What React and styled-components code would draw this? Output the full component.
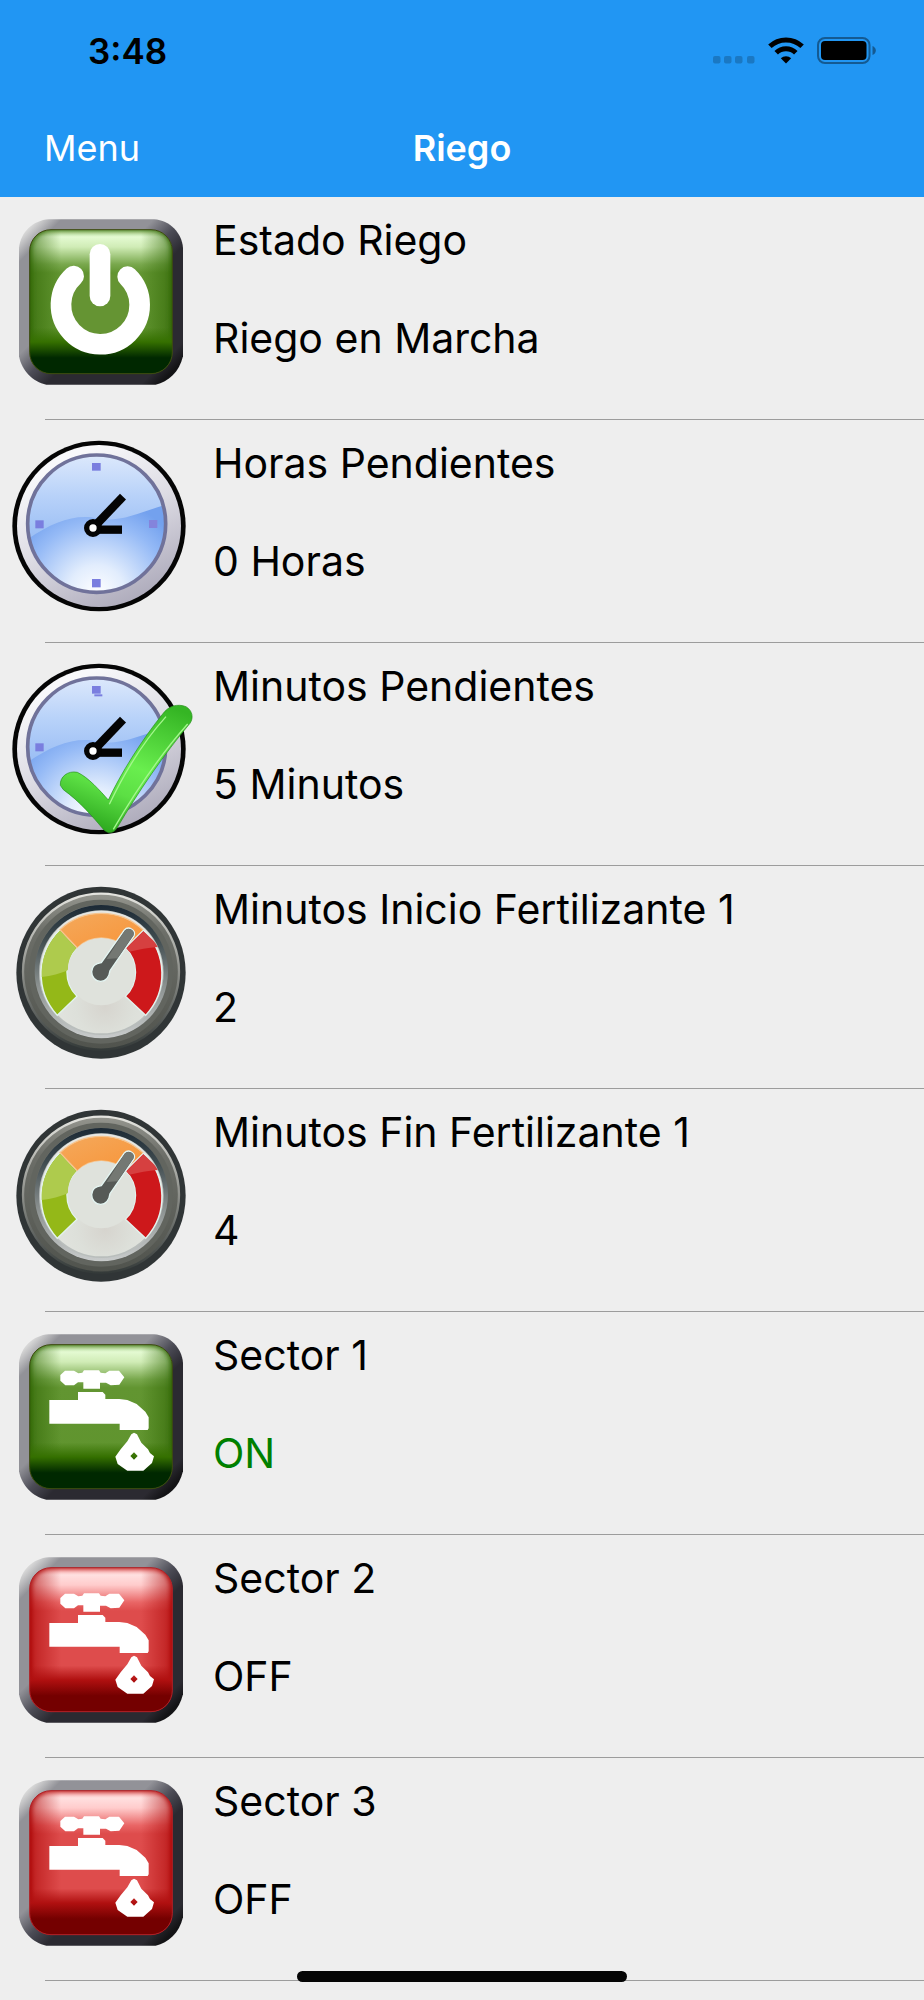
import React, { useId } from "react";
import styled, { createGlobalStyle } from "styled-components";

const GlobalStyle = createGlobalStyle`
  * {
    box-sizing: border-box;
  }

  body {
    margin: 0;
    background: #eeeeee;
    color: #000000;
    font-family: Inter, Roboto, sans-serif;
  }
`;

const Screen = styled.div`
  min-height: 100vh;
  background: #eeeeee;
`;

const Header = styled.header`
  background: #2196f3;
`;

const StatusBar = styled.div`
  display: flex;
  align-items: center;
  justify-content: space-between;
  height: 101px;
  padding: 0 47px 0 88px;
`;

const Time = styled.time`
  font-size: 35px;
  font-weight: 600;
`;

const StatusIcons = styled.div`
  display: flex;
  align-items: center;
  gap: 13px;
`;

const NavBar = styled.nav`
  display: grid;
  grid-template-columns: 1fr auto 1fr;
  align-items: center;
  height: 96px;
  padding: 0 44px 3px;
  color: #ffffff;
`;

const MenuButton = styled.button`
  justify-self: start;
  padding: 0;
  border: 0;
  background: none;
  color: inherit;
  font-family: inherit;
  font-size: 36px;
  cursor: pointer;
`;

const Title = styled.h1`
  margin: 0;
  font-size: 36px;
  font-weight: 600;
`;

const List = styled.ul`
  margin: 0;
  padding: 0;
  list-style: none;
`;

const Row = styled.li`
  display: grid;
  grid-template-columns: 200px 1fr;
  column-gap: 13px;
`;

const Info = styled.div`
  display: flex;
  flex-direction: column;
  gap: 48px;
  padding: 18px 0 56px;
`;

const Label = styled.p`
  margin: 0;
  font-size: 41px;
  line-height: 50px;
  color: ${(props) => props.$color || "#000000"};
`;

const Separator = styled.div`
  grid-column: 1 / -1;
  height: 1px;
  margin-left: 45px;
  background: #9c9c9c;
`;

const Icon = styled.svg`
  display: block;
  width: 200px;
  height: 210px;
`;

const HomeIndicator = styled.div`
  position: fixed;
  bottom: 18px;
  left: 50%;
  width: 330px;
  height: 11px;
  margin-left: -165px;
  border-radius: 6px;
  background: #050505;
`;

const panelColors = {
  green: {
    edge: "#2c6200",
    line: "#3d4a10",
    low: "#357000",
    base: "#002800",
    stops: [
      [0, "#b5d894"],
      [0.05, "#e4fad2"],
      [0.12, "#d0ecb6"],
      [0.24, "#79a84d"],
      [0.3, "#629531"],
      [1, "#5f942d"],
    ],
  },
  red: {
    edge: "#a80000",
    line: "#b02026",
    low: "#b01010",
    base: "#740000",
    stops: [
      [0, "#ffb0b0"],
      [0.05, "#ffe0e0"],
      [0.12, "#ffcccc"],
      [0.24, "#e96666"],
      [0.3, "#de4c4c"],
      [1, "#de4c4c"],
    ],
  },
};

const Panel = ({ color, children }) => {
  const id = useId();
  const { edge, line, low, base, stops } = panelColors[color];
  return (
    <Icon viewBox="0 -10 600 630" aria-hidden="true">
      <defs>
        <linearGradient id={`${id}frame`} x1="0" y1="0" x2="1" y2="1">
          <stop offset="0.06" stopColor="#d6d6d6" />
          <stop offset="0.13" stopColor="#929298" />
          <stop offset="0.41" stopColor="#929298" />
          <stop offset="0.5" stopColor="#4c4c56" />
          <stop offset="0.58" stopColor="#2b2a31" />
          <stop offset="0.87" stopColor="#2b2a31" />
          <stop offset="0.93" stopColor="#121214" />
          <stop offset="1" stopColor="#2b2a31" />
        </linearGradient>
        <linearGradient id={`${id}face`} x1="0" y1="0" x2="0" y2="1">
          {stops.map(([offset, stop]) => (
            <stop key={offset} offset={offset} stopColor={stop} />
          ))}
        </linearGradient>
        <linearGradient id={`${id}sides`} x1="0" y1="0" x2="1" y2="0">
          <stop offset="0" stopColor={edge} stopOpacity="0.6" />
          <stop offset="0.22" stopColor={edge} stopOpacity="0" />
          <stop offset="0.78" stopColor={edge} stopOpacity="0" />
          <stop offset="1" stopColor={edge} stopOpacity="0.6" />
        </linearGradient>
        <linearGradient id={`${id}shade`} x1="0" y1="0" x2="0" y2="1">
          <stop offset="0.68" stopColor={low} stopOpacity="0" />
          <stop offset="0.78" stopColor={low} />
          <stop offset="0.89" stopColor={base} />
        </linearGradient>
        <clipPath id={`${id}clip`}>
          <rect x="89" y="88" width="428" height="432" rx="64" />
        </clipPath>
        <filter id={`${id}soft`}>
          <feGaussianBlur stdDeviation="8" />
        </filter>
      </defs>
      <path
        d="M146 57H462C510 60 545 98 549 142V468C538 515 505 545 467 553H139C98 545 65 510 57 468V142C62 95 100 60 146 57Z"
        fill={`url(#${id}frame)`}
      />
      <g clipPath={`url(#${id}clip)`}>
        <rect x="89" y="88" width="428" height="432" fill={`url(#${id}face)`} />
        <rect x="89" y="88" width="428" height="432" fill={`url(#${id}sides)`} />
        <rect
          x="87"
          y="84"
          width="432"
          height="438"
          rx="64"
          fill="none"
          stroke={edge}
          strokeWidth="14"
          filter={`url(#${id}soft)`}
        />
        <rect x="89" y="88" width="428" height="432" fill={`url(#${id}shade)`} />
      </g>
      <rect
        x="89"
        y="88"
        width="428"
        height="432"
        rx="64"
        fill="none"
        stroke={line}
        strokeWidth="3"
      />
      {children}
    </Icon>
  );
};

const PowerIcon = () => (
  <Panel color="green">
    <circle cx="301" cy="314" r="100" fill="#659433" />
    <g fill="none" stroke="#ffffff" strokeWidth="62" strokeLinecap="round">
      <path d="M221 227A118 118 0 1 0 383 229" />
      <path d="M300 162V287" />
    </g>
  </Panel>
);

const TapIcon = ({ color }) => (
  <Panel color={color}>
    <g fill="#ffffff" transform="translate(0 14)">
      <path d="M181 165L195 152H222L235 160L247 158L252 151H297L302 158L316 160L328 152H357L373 172L358 194L332 196L318 188H300V206H250V187H234L222 196H196L181 182Z" />
      <path d="M234 216H308L316 224V237H358L382 240L410 252L436 275L446 292V325L443 330H359V311H148V240H234Z" />
      <path
        fillRule="evenodd"
        d="M402 338L411 343L424 368L444 388L450 399L462 409L456 429L430 452H382L353 432L346 410L362 388L382 364L394 343ZM402 397L391 408L402 419L413 408Z"
      />
    </g>
  </Panel>
);

const ClockIcon = ({ checked }) => {
  const id = useId();
  return (
    <Icon viewBox="0 -15 600 630" aria-hidden="true">
      <defs>
        <linearGradient id={`${id}rim`} x1="0.25" y1="0" x2="0.75" y2="1">
          <stop offset="0.1" stopColor="#f8f8fa" />
          <stop offset="0.5" stopColor="#dddce4" />
          <stop offset="1" stopColor="#aaa7b8" />
        </linearGradient>
        <radialGradient id={`${id}face`} cx="0.5" cy="1" r="0.68">
          <stop offset="0" stopColor="#ffffff" />
          <stop offset="0.3" stopColor="#e2edfd" />
          <stop offset="0.75" stopColor="#95baf6" />
          <stop offset="1" stopColor="#73a1ee" />
        </radialGradient>
        <linearGradient id={`${id}gloss`} x1="0" y1="0" x2="0" y2="1">
          <stop offset="0" stopColor="#dfeafc" />
          <stop offset="0.5" stopColor="#b8d2f9" />
          <stop offset="1" stopColor="#99bdf4" />
        </linearGradient>
        <linearGradient id={`${id}check`} x1="0.8" y1="0" x2="0.4" y2="1">
          <stop offset="0" stopColor="#35b524" />
          <stop offset="0.5" stopColor="#69ee4e" />
          <stop offset="0.72" stopColor="#5cdf44" />
          <stop offset="1" stopColor="#2fab20" />
        </linearGradient>
        <clipPath id={`${id}clip`}>
          <ellipse cx="290" cy="296" rx="205" ry="204" />
        </clipPath>
      </defs>
      <ellipse cx="297" cy="303" rx="260" ry="256" fill="#050505" />
      <ellipse cx="297" cy="303" rx="246" ry="243" fill={`url(#${id}rim)`} />
      <g clipPath={`url(#${id}clip)`}>
        <rect x="80" y="86" width="420" height="420" fill={`url(#${id}face)`} />
        <path
          d="M80 345C150 295 215 270 275 277C350 300 425 260 500 238V80H80Z"
          fill={`url(#${id}gloss)`}
        />
      </g>
      <ellipse
        cx="290"
        cy="296"
        rx="207"
        ry="206"
        fill="none"
        stroke="#70729a"
        strokeWidth="11"
      />
      <g fill="#7a7edf">
        <rect x="276" y="114" width="26" height="23" />
        <rect x="106" y="286" width="25" height="24" />
        {checked ? (
          <rect x="283" y="139" width="24" height="6" />
        ) : (
          <>
            <rect x="276" y="462" width="26" height="25" />
            <rect x="447" y="285" width="25" height="24" fill="#8484dc" />
          </>
        )}
      </g>
      <g fill="none" stroke="#040404">
        <path d="M279 309L369 215" strokeWidth="25" />
        <path d="M279 314H366" strokeWidth="25" />
      </g>
      <circle cx="279" cy="309" r="19" fill="#ffffff" stroke="#040404" strokeWidth="16" />
      {checked && (
        <g transform="translate(0 6)">
          <path
            d="M181 406C179 380 204 361 232 367C265 382 300 422 325 450C360 375 425 270 488 192C505 168 532 160 558 170C578 182 581 204 570 220C490 315 415 425 351 534C341 550 325 552 312 540C278 500 240 455 190 419Z"
            fill={`url(#${id}check)`}
            stroke="#268f1b"
            strokeWidth="2"
          />
          <path
            d="M498 200C430 275 370 375 328 463M563 222C480 315 400 435 340 538"
            fill="none"
            stroke="#a5f78e"
            strokeWidth="4"
          />
        </g>
      )}
    </Icon>
  );
};

const GaugeIcon = () => {
  const id = useId();
  return (
    <Icon viewBox="0 -11 600 630" aria-hidden="true">
      <defs>
        <linearGradient id={`${id}rim`} x1="0" y1="0" x2="0" y2="1">
          <stop offset="0" stopColor="#94958e" />
          <stop offset="0.25" stopColor="#6c6e68" />
          <stop offset="1" stopColor="#50534d" />
        </linearGradient>
        <linearGradient id={`${id}edge`} x1="0" y1="0" x2="0" y2="1">
          <stop offset="0" stopColor="#e4e4df" />
          <stop offset="0.5" stopColor="#8e908b" />
          <stop offset="1" stopColor="#343a39" />
        </linearGradient>
        <linearGradient id={`${id}well`} x1="0" y1="0" x2="0" y2="1">
          <stop offset="0" stopColor="#1b2935" />
          <stop offset="0.25" stopColor="#3e4a4e" />
          <stop offset="0.6" stopColor="#8a908f" />
          <stop offset="1" stopColor="#c9cccc" />
        </linearGradient>
        <linearGradient id={`${id}orange`} x1="0" y1="0" x2="1" y2="1">
          <stop offset="0" stopColor="#f4a95c" />
          <stop offset="1" stopColor="#f89438" />
        </linearGradient>
        <radialGradient id={`${id}dial`} cx="0.53" cy="0.78" r="0.6">
          <stop offset="0" stopColor="#d6d4ce" />
          <stop offset="0.4" stopColor="#dde0da" />
          <stop offset="1" stopColor="#e6e7e3" />
        </radialGradient>
      </defs>
      <ellipse cx="303" cy="309" rx="254" ry="258" fill="#303536" />
      <circle
        cx="303"
        cy="306"
        r="234"
        fill={`url(#${id}rim)`}
        stroke={`url(#${id}edge)`}
        strokeWidth="7"
      />
      <circle cx="303" cy="306" r="208" fill="none" stroke="#62655f" strokeWidth="16" />
      <circle cx="304" cy="306" r="200" fill={`url(#${id}well)`} />
      <circle cx="304" cy="309" r="187" fill="#b9bebc" />
      <circle cx="304" cy="307" r="184" fill={`url(#${id}dial)`} />
      <g stroke="#e3f3ee" strokeWidth="4">
        <path d="M172 437A184 184 0 0 1 180 180L232 235A101 101 0 0 0 231 380Z" fill="#94b818" />
        <path
          d="M180 180A182 182 0 0 1 430 182L376 235A101 101 0 0 0 232 235Z"
          fill={`url(#${id}orange)`}
          stroke="#f6c48e"
        />
        <path d="M430 182A182 182 0 0 1 437 437L376 380A101 101 0 0 0 376 235Z" fill="#cd181b" />
      </g>
      <path d="M125 322A180 180 0 0 1 180 183L229 236C210 257 205 275 204 301C180 313 155 318 125 322Z" fill="#aecb4d" />
      <path d="M430 185C452 205 465 215 473 232C445 234 415 240 388 246L379 235Z" fill="#d64040" />
      <circle cx="304" cy="306" r="101" fill="#dfe2dc" />
      <path
        d="M373 181C385 168 409 180 402 199L330 303C328 322 317 335 302 335C286 335 275 322 275 306C276 290 286 281 304 279Z"
        fill="#565a57"
        stroke="#e4f5f2"
        strokeWidth="4"
      />
      <path d="M374 183C386 171 406 182 400 197L352 266L320 268Z" fill="#747873" />
    </Icon>
  );
};

const SignalIcon = () => (
  <svg width="42" height="27" viewBox="0 0 42 27" fill="#1a78c3" aria-hidden="true">
    {[0, 11, 22, 34].map((x) => (
      <rect key={x} x={x} y="19" width="7.5" height="7.5" rx="2" />
    ))}
  </svg>
);

const WifiIcon = () => (
  <svg width="36" height="27" viewBox="0 0 36 27" aria-hidden="true">
    <g fill="none" stroke="#000000" strokeWidth="5">
      <path d="M1.9 9.3A23.5 23.5 0 0 1 34.1 9.3" />
      <path d="M8.2 15.8A14 14 0 0 1 27.8 15.8" />
    </g>
    <path d="M18 26.5L12.8 21.3A7.6 7.6 0 0 1 23.2 21.3Z" />
  </svg>
);

const BatteryIcon = () => (
  <svg width="60" height="27" viewBox="0 0 60 27" aria-hidden="true">
    <rect
      x="1"
      y="1"
      width="51.5"
      height="25"
      rx="7"
      fill="none"
      stroke="#145a92"
      strokeWidth="2"
    />
    <rect x="4" y="4" width="45.5" height="19" rx="4" />
    <path d="M55.5 9Q58.8 10.5 58.8 13.5T55.5 18Z" fill="#145a92" />
  </svg>
);

const items = [
  { icon: <PowerIcon />, name: "Estado Riego", value: "Riego en Marcha" },
  { icon: <ClockIcon />, name: "Horas Pendientes", value: "0 Horas" },
  { icon: <ClockIcon checked />, name: "Minutos Pendientes", value: "5 Minutos" },
  { icon: <GaugeIcon />, name: "Minutos Inicio Fertilizante 1", value: "2" },
  { icon: <GaugeIcon />, name: "Minutos Fin Fertilizante 1", value: "4" },
  { icon: <TapIcon color="green" />, name: "Sector 1", value: "ON", color: "#008000" },
  { icon: <TapIcon color="red" />, name: "Sector 2", value: "OFF" },
  { icon: <TapIcon color="red" />, name: "Sector 3", value: "OFF" },
];

const App = () => {
  return (
    <Screen>
      <GlobalStyle />
      <Header>
        <StatusBar>
          <Time>3:48</Time>
          <StatusIcons>
            <SignalIcon />
            <WifiIcon />
            <BatteryIcon />
          </StatusIcons>
        </StatusBar>
        <NavBar>
          <MenuButton type="button">Menu</MenuButton>
          <Title>Riego</Title>
        </NavBar>
      </Header>
      <List>
        {items.map((item) => (
          <Row key={item.name}>
            {item.icon}
            <Info>
              <Label>{item.name}</Label>
              <Label $color={item.color}>{item.value}</Label>
            </Info>
            <Separator />
          </Row>
        ))}
      </List>
      <HomeIndicator />
    </Screen>
  );
};

export default App;
